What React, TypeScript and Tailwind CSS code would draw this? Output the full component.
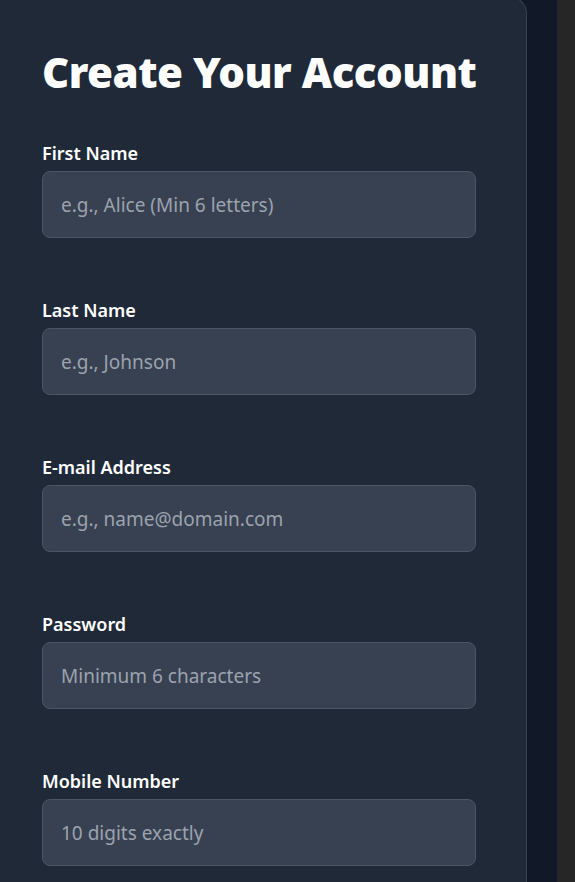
import React from "react";

const fields = [
  { label: "First Name", placeholder: "e.g., Alice (Min 6 letters)", type: "text" },
  { label: "Last Name", placeholder: "e.g., Johnson", type: "text" },
  { label: "E-mail Address", placeholder: "e.g., name@domain.com", type: "email" },
  { label: "Password", placeholder: "Minimum 6 characters", type: "password" },
  { label: "Mobile Number", placeholder: "10 digits exactly", type: "tel" },
];

export default function App() {
  return (
    <div className="flex h-[882px] w-[575px] overflow-hidden bg-[#111827] font-['Noto_Sans',sans-serif]">
      <div className="flex-1">
        <div className="-mt-[3px] h-[900px] w-[527px] rounded-tr-2xl border-r border-t border-[#374151] bg-[#1f2937] pl-[42px] pt-[46px]">
          <h1 className="text-[42px] font-black leading-[56px] tracking-[-0.5px] text-white">
            Create Your Account
          </h1>
          <div className="mt-[42px] flex flex-col gap-[61px]">
            {fields.map((f) => (
              <div key={f.label} className="flex flex-col">
                <label className="text-[18px] font-semibold leading-[22px] text-white">{f.label}</label>
                <input
                  type={f.type}
                  placeholder={f.placeholder}
                  className="mt-[7px] h-[67px] w-[434px] rounded-lg border border-[#4b5563] bg-[#374151] px-[18px] text-[19px] text-white outline-none placeholder:text-[#9ca3af]"
                />
              </div>
            ))}
          </div>
        </div>
      </div>
      <div className="w-[18px] bg-[#262626]" />
    </div>
  );
}
